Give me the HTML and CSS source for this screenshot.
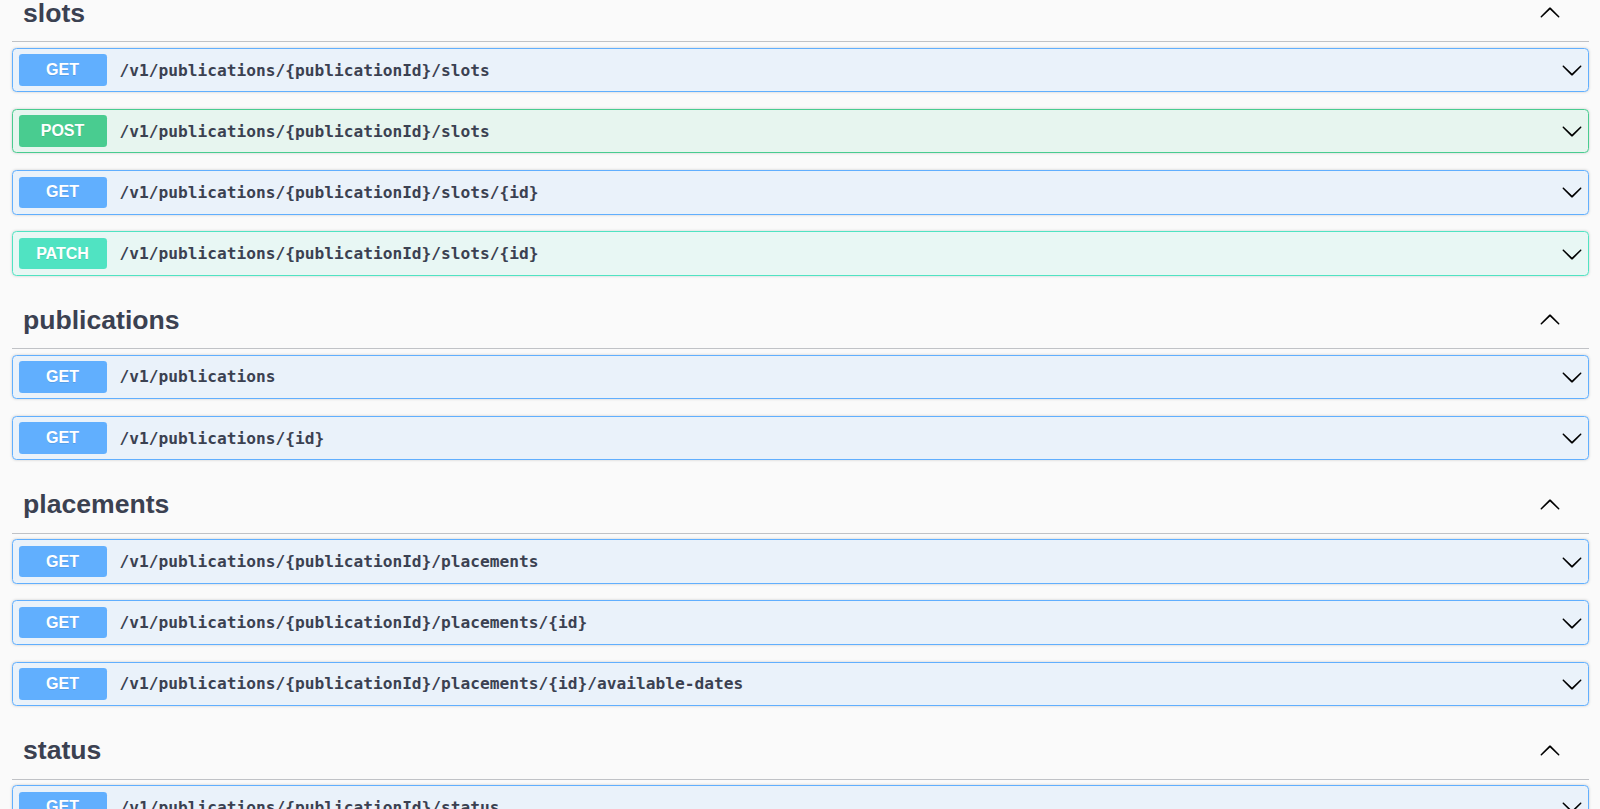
FILE: index.html
```html
<!DOCTYPE html>
<html lang="en">
<head>
<meta charset="utf-8">
<title>API</title>
<link rel="stylesheet" href="styles.css">
</head>
<body>
<div class="page">

  <section class="tag-section">
    <h3 class="tag"><span class="tag-name">slots</span>
      <svg class="tag-arrow" viewBox="0 0 20 20"><path transform="rotate(180 10 10)" d="M17.418 6.109c.272-.268.709-.268.979 0s.271.701 0 .969l-7.908 7.83c-.27.268-.707.268-.979 0l-7.908-7.83c-.27-.268-.27-.701 0-.969.271-.268.709-.268.979 0L10 13.25l7.418-7.141z"/></svg>
    </h3>
    <div class="op op-get"><span class="method">GET</span><span class="path">/v1/publications/{publicationId}/slots</span><svg class="arrow" viewBox="0 0 20 20"><path d="M17.418 6.109c.272-.268.709-.268.979 0s.271.701 0 .969l-7.908 7.83c-.27.268-.707.268-.979 0l-7.908-7.83c-.27-.268-.27-.701 0-.969.271-.268.709-.268.979 0L10 13.25l7.418-7.141z"/></svg></div>
    <div class="op op-post"><span class="method">POST</span><span class="path">/v1/publications/{publicationId}/slots</span><svg class="arrow" viewBox="0 0 20 20"><path d="M17.418 6.109c.272-.268.709-.268.979 0s.271.701 0 .969l-7.908 7.83c-.27.268-.707.268-.979 0l-7.908-7.830c-.27-.268-.27-.701 0-.969.271-.268.709-.268.979 0L10 13.25l7.418-7.141z"/></svg></div>
    <div class="op op-get"><span class="method">GET</span><span class="path">/v1/publications/{publicationId}/slots/{id}</span><svg class="arrow" viewBox="0 0 20 20"><path d="M17.418 6.109c.272-.268.709-.268.979 0s.271.701 0 .969l-7.908 7.83c-.27.268-.707.268-.979 0l-7.908-7.83c-.27-.268-.27-.701 0-.969.271-.268.709-.268.979 0L10 13.25l7.418-7.141z"/></svg></div>
    <div class="op op-patch"><span class="method">PATCH</span><span class="path">/v1/publications/{publicationId}/slots/{id}</span><svg class="arrow" viewBox="0 0 20 20"><path d="M17.418 6.109c.272-.268.709-.268.979 0s.271.701 0 .969l-7.908 7.83c-.27.268-.707.268-.979 0l-7.908-7.83c-.27-.268-.27-.701 0-.969.271-.268.709-.268.979 0L10 13.25l7.418-7.141z"/></svg></div>
  </section>

  <section class="tag-section">
    <h3 class="tag"><span class="tag-name">publications</span>
      <svg class="tag-arrow" viewBox="0 0 20 20"><path transform="rotate(180 10 10)" d="M17.418 6.109c.272-.268.709-.268.979 0s.271.701 0 .969l-7.908 7.83c-.27.268-.707.268-.979 0l-7.908-7.83c-.27-.268-.27-.701 0-.969.271-.268.709-.268.979 0L10 13.25l7.418-7.141z"/></svg>
    </h3>
    <div class="op op-get"><span class="method">GET</span><span class="path">/v1/publications</span><svg class="arrow" viewBox="0 0 20 20"><path d="M17.418 6.109c.272-.268.709-.268.979 0s.271.701 0 .969l-7.908 7.83c-.27.268-.707.268-.979 0l-7.908-7.83c-.27-.268-.27-.701 0-.969.271-.268.709-.268.979 0L10 13.25l7.418-7.141z"/></svg></div>
    <div class="op op-get"><span class="method">GET</span><span class="path">/v1/publications/{id}</span><svg class="arrow" viewBox="0 0 20 20"><path d="M17.418 6.109c.272-.268.709-.268.979 0s.271.701 0 .969l-7.908 7.83c-.27.268-.707.268-.979 0l-7.908-7.83c-.27-.268-.27-.701 0-.969.271-.268.709-.268.979 0L10 13.25l7.418-7.141z"/></svg></div>
  </section>

  <section class="tag-section">
    <h3 class="tag"><span class="tag-name">placements</span>
      <svg class="tag-arrow" viewBox="0 0 20 20"><path transform="rotate(180 10 10)" d="M17.418 6.109c.272-.268.709-.268.979 0s.271.701 0 .969l-7.908 7.83c-.27.268-.707.268-.979 0l-7.908-7.83c-.27-.268-.27-.701 0-.969.271-.268.709-.268.979 0L10 13.25l7.418-7.141z"/></svg>
    </h3>
    <div class="op op-get"><span class="method">GET</span><span class="path">/v1/publications/{publicationId}/placements</span><svg class="arrow" viewBox="0 0 20 20"><path d="M17.418 6.109c.272-.268.709-.268.979 0s.271.701 0 .969l-7.908 7.83c-.27.268-.707.268-.979 0l-7.908-7.83c-.27-.268-.27-.701 0-.969.271-.268.709-.268.979 0L10 13.25l7.418-7.141z"/></svg></div>
    <div class="op op-get"><span class="method">GET</span><span class="path">/v1/publications/{publicationId}/placements/{id}</span><svg class="arrow" viewBox="0 0 20 20"><path d="M17.418 6.109c.272-.268.709-.268.979 0s.271.701 0 .969l-7.908 7.83c-.27.268-.707.268-.979 0l-7.908-7.83c-.27-.268-.27-.701 0-.969.271-.268.709-.268.979 0L10 13.25l7.418-7.141z"/></svg></div>
    <div class="op op-get"><span class="method">GET</span><span class="path">/v1/publications/{publicationId}/placements/{id}/available-dates</span><svg class="arrow" viewBox="0 0 20 20"><path d="M17.418 6.109c.272-.268.709-.268.979 0s.271.701 0 .969l-7.908 7.83c-.27.268-.707.268-.979 0l-7.908-7.83c-.27-.268-.27-.701 0-.969.271-.268.709-.268.979 0L10 13.25l7.418-7.141z"/></svg></div>
  </section>

  <section class="tag-section">
    <h3 class="tag"><span class="tag-name">status</span>
      <svg class="tag-arrow" viewBox="0 0 20 20"><path transform="rotate(180 10 10)" d="M17.418 6.109c.272-.268.709-.268.979 0s.271.701 0 .969l-7.908 7.83c-.27.268-.707.268-.979 0l-7.908-7.83c-.27-.268-.27-.701 0-.969.271-.268.709-.268.979 0L10 13.25l7.418-7.141z"/></svg>
    </h3>
    <div class="op op-get"><span class="method">GET</span><span class="path">/v1/publications/{publicationId}/status</span><svg class="arrow" viewBox="0 0 20 20"><path d="M17.418 6.109c.272-.268.709-.268.979 0s.271.701 0 .969l-7.908 7.83c-.27.268-.707.268-.979 0l-7.908-7.83c-.27-.268-.27-.701 0-.969.271-.268.709-.268.979 0L10 13.25l7.418-7.141z"/></svg></div>
  </section>

</div>
</body>
</html>
```

FILE: styles.css
```css
html, body {
  margin: 0;
  padding: 0;
  height: 100%;
  overflow: hidden;
  background: #fafafa;
}

.page {
  padding: 0 11px 0 12px;
  margin-top: -14.4px;
}

.tag-section {
  display: flex;
  flex-direction: column;
}

.tag {
  display: flex;
  align-items: center;
  box-sizing: border-box;
  height: 56.7px;
  margin: 0 0 5.5px;
  padding: 0 28.3px 0 11px;
  border-bottom: 1px solid rgba(59, 65, 81, 0.3);
  font-family: "Liberation Sans", Arial, sans-serif;
  font-size: 26.6px;
  font-weight: 700;
  color: #3b4151;
}

.tag-name {
  flex: 1;
}

.tag-arrow {
  width: 22px;
  height: 22px;
  flex-shrink: 0;
  fill: #000;
}

.op {
  display: flex;
  align-items: center;
  box-sizing: border-box;
  height: 44.5px;
  margin-bottom: 16.7px;
  padding: 0 5.5px;
  border: 1px solid #000;
  border-radius: 4.4px;
  box-shadow: 0 0 3px rgba(0, 0, 0, 0.19);
}

.method {
  display: flex;
  align-items: center;
  justify-content: center;
  flex-shrink: 0;
  width: 88px;
  height: 31.5px;
  border-radius: 3.3px;
  color: #fff;
  font-family: "Liberation Sans", Arial, sans-serif;
  font-size: 16px;
  font-weight: 700;
  text-shadow: 0 1.1px 0 rgba(0, 0, 0, 0.1);
}

.path {
  flex: 1;
  padding: 0 11px 0 13px;
  font-family: "DejaVu Sans Mono", "Liberation Mono", monospace;
  font-size: 16.2px;
  font-weight: 700;
  color: #3b4151;
  white-space: nowrap;
}

.arrow {
  width: 22px;
  height: 22px;
  flex-shrink: 0;
  fill: #000;
}

.op-get {
  background: rgba(97, 175, 254, 0.1);
  border-color: #61affe;
}
.op-get .method {
  background: #61affe;
}

.op-post {
  background: rgba(73, 204, 144, 0.1);
  border-color: #49cc90;
}
.op-post .method {
  background: #49cc90;
}

.op-patch {
  background: rgba(80, 227, 194, 0.1);
  border-color: #50e3c2;
}
.op-patch .method {
  background: #50e3c2;
}
```
